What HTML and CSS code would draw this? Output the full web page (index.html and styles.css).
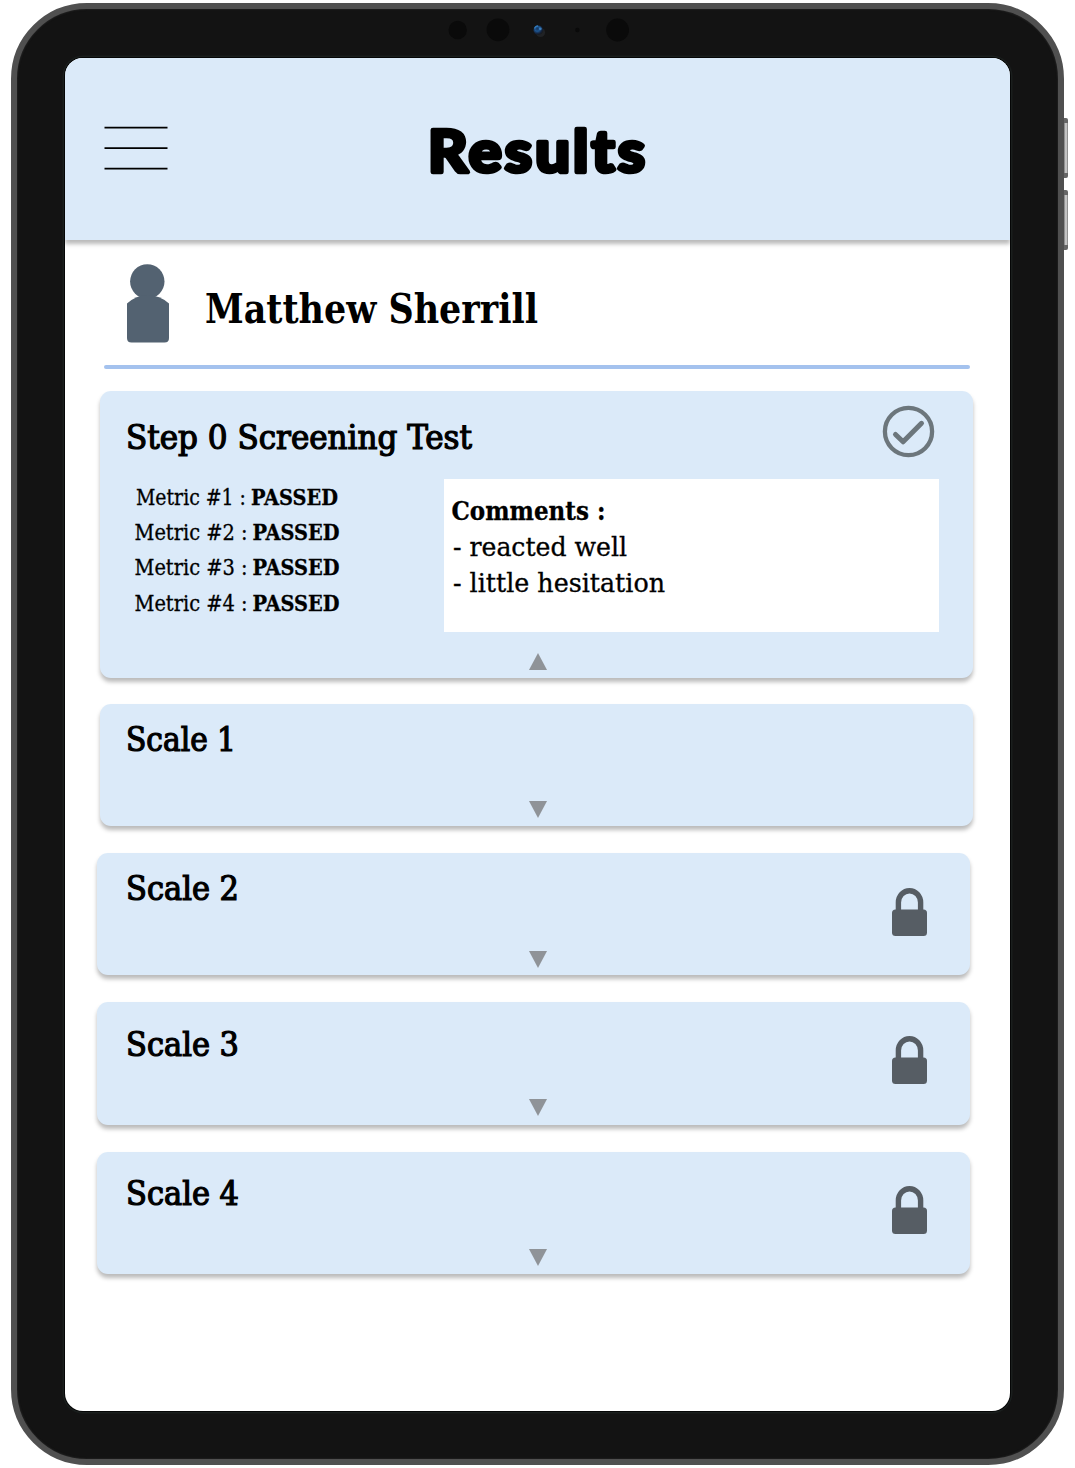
FILE: index.html
```html
<!DOCTYPE html>
<html lang="en">
<head>
<meta charset="utf-8">
<title>Results</title>
<link rel="stylesheet" href="styles.css">
</head>
<body>
<div class="tablet">
  <span class="side-button volume-up"></span>
  <span class="side-button volume-down"></span>
  <svg class="sensors" width="190" height="30" viewBox="443 15 190 30">
    <defs><radialGradient id="lens" cx=".4" cy=".35" r=".65"><stop offset="0" stop-color="#17365c"/><stop offset=".4" stop-color="#1d5590"/><stop offset=".75" stop-color="#14243f"/><stop offset="1" stop-color="#17191c"/></radialGradient></defs>
    <g fill="#0a0a0a"><circle cx="457.7" cy="30" r="9.2"/><circle cx="498" cy="29.8" r="11.4"/><circle cx="577.4" cy="30" r="2.2"/><circle cx="617.6" cy="30" r="11.4"/></g>
    <circle cx="540.5" cy="32.5" r="4.6" fill="#202225"/>
    <circle cx="538.3" cy="30.2" r="4.8" fill="url(#lens)"/>
    <path d="M534.5 28.5q1-2.500 3.500-2.500" fill="none" stroke="#3178b8" stroke-width="1.300"/>
    <circle cx="540.300" cy="28.800" r="1.400" fill="#397dba"/>
  </svg>
  <main class="screen">
    <header class="topbar">
      <svg class="menu" width="64" height="46" viewBox="104 125 64 46"><path d="M104.500 127.700H167.500M104.500 148.200H167.500M104.500 168.600H167.500"/></svg>
      <svg class="heading" width="230" height="70"><text x="3" y="56" textLength="220" lengthAdjust="spacingAndGlyphs">Results</text></svg>
    </header>
    <section class="profile">
      <svg class="person" width="42" height="79" viewBox="127 263.500 42 79"><circle cx="147.300" cy="281" r="17.200"/><path d="M127 303Q136 294.800 147.500 294.500Q160 294.800 169 303V337.500Q169 342 164.500 342H131.500Q127 342 127 337.500Z"/></svg>
      <svg class="name" width="360" height="60"><text x="0" y="45" textLength="333" lengthAdjust="spacingAndGlyphs">Matthew Sherrill</text></svg>
    </section>
    <div class="divider"></div>
    <section class="cards">
      <article class="card open">
        <div class="card-head">
          <svg class="title" width="360" height="50"><text x="0" y="40" textLength="346" lengthAdjust="spacingAndGlyphs">Step 0 Screening Test</text></svg>
          <svg class="check" width="53" height="53" viewBox="882.200 405.200 53 53"><circle cx="908.700" cy="431.700" r="23.600" stroke-width="4.300"/><path d="M895.700 434.700L903.300 442L921.700 423.500" stroke-width="5"/></svg>
        </div>
        <div class="details">
          <svg class="metrics" width="220" height="144" viewBox="130 479 220 144">
            <text x="136" y="504.800" textLength="110" lengthAdjust="spacingAndGlyphs">Metric #1 :</text><text class="strong" x="251" y="504.800" textLength="87" lengthAdjust="spacingAndGlyphs">PASSED</text>
            <text x="134.500" y="540.200" textLength="113" lengthAdjust="spacingAndGlyphs">Metric #2 :</text><text class="strong" x="252.500" y="540.200" textLength="87" lengthAdjust="spacingAndGlyphs">PASSED</text>
            <text x="134.500" y="575.300" textLength="113" lengthAdjust="spacingAndGlyphs">Metric #3 :</text><text class="strong" x="252.500" y="575.300" textLength="87" lengthAdjust="spacingAndGlyphs">PASSED</text>
            <text x="134.500" y="610.500" textLength="113" lengthAdjust="spacingAndGlyphs">Metric #4 :</text><text class="strong" x="252.500" y="610.500" textLength="87" lengthAdjust="spacingAndGlyphs">PASSED</text>
          </svg>
          <div class="comments">
            <svg width="300" height="150" viewBox="444 479 300 150">
              <text class="strong" x="451.500" y="519.500" textLength="154" lengthAdjust="spacingAndGlyphs">Comments :</text>
              <text x="453" y="556" textLength="174" lengthAdjust="spacingAndGlyphs">- reacted well</text>
              <text x="453" y="592" textLength="212" lengthAdjust="spacingAndGlyphs">- little hesitation</text>
            </svg>
          </div>
        </div>
        <svg class="arrow" width="18" height="17"><path d="M9 0L18 17H0Z"/></svg>
      </article>
      <article class="card">
        <svg class="title" width="130" height="50"><text x="0" y="40" textLength="110" lengthAdjust="spacingAndGlyphs">Scale 1</text></svg>
        <svg class="arrow" width="18" height="17"><path d="M0 0H18L9 17Z"/></svg>
      </article>
      <article class="card locked second">
        <div class="card-head">
          <svg class="title" width="130" height="50"><text x="0" y="40" textLength="113" lengthAdjust="spacingAndGlyphs">Scale 2</text></svg>
          <svg class="lock" width="35" height="48"><path d="M6.400 25V14.500a11.100 11.800 0 0 1 22.200 0V25" fill="none" stroke="#565d64" stroke-width="5.400"/><rect y="21.600" width="35" height="26.400" rx="3.500"/></svg>
        </div>
        <svg class="arrow" width="18" height="17"><path d="M0 0H18L9 17Z"/></svg>
      </article>
      <article class="card locked third">
        <div class="card-head">
          <svg class="title" width="130" height="50"><text x="0" y="40" textLength="113" lengthAdjust="spacingAndGlyphs">Scale 3</text></svg>
          <svg class="lock" width="35" height="48"><path d="M6.400 25V14.500a11.100 11.800 0 0 1 22.200 0V25" fill="none" stroke="#565d64" stroke-width="5.400"/><rect y="21.600" width="35" height="26.400" rx="3.500"/></svg>
        </div>
        <svg class="arrow" width="18" height="17"><path d="M0 0H18L9 17Z"/></svg>
      </article>
      <article class="card locked fourth">
        <div class="card-head">
          <svg class="title" width="130" height="50"><text x="0" y="40" textLength="113" lengthAdjust="spacingAndGlyphs">Scale 4</text></svg>
          <svg class="lock" width="35" height="48"><path d="M6.400 25V14.500a11.100 11.800 0 0 1 22.200 0V25" fill="none" stroke="#565d64" stroke-width="5.400"/><rect y="21.600" width="35" height="26.400" rx="3.500"/></svg>
        </div>
        <svg class="arrow" width="18" height="17"><path d="M0 0H18L9 17Z"/></svg>
      </article>
    </section>
  </main>
</div>
</body>
</html>
```
FILE: styles.css
```css
* { box-sizing: border-box; }
body { margin: 0; padding: 3px 0 0 11px; height: 1468px; background: #fff; overflow: hidden; font-family: "Roboto Slab", "DejaVu Serif Condensed", "DejaVu Serif", serif; }
svg { display: block; flex: none; overflow: visible; }
text { fill: #000; }
.tablet { position: relative; width: 1053px; height: 1462px; padding: 48px 47px 47px 47px; border: 6px solid #505050; border-radius: 76px; background: #131313; box-shadow: inset 0 0 2px #333; }
.side-button { position: absolute; left: 1047px; width: 4px; height: 60px; border-radius: 0 2px 2px 0; background: linear-gradient(#666 0 5px, transparent 5px 55px, #666 55px), linear-gradient(90deg, #777, #ddd 50%, #777); }
.volume-up { top: 109px; }
.volume-down { top: 181px; }
.sensors { position: absolute; left: 426px; top: 6px; }
.screen { width: 945px; height: 1353.500px; margin: .5px 0 0 1px; border-radius: 18px; overflow: hidden; background: #fff; box-shadow: 0 0 0 1px #050606, 0 0 0 2.500px #1a1e1d; }
.topbar { display: flex; height: 182.500px; padding: 67.500px 0 0 39px; background: #dbeaf9; box-shadow: 0 4px 4px rgba(0,0,0,.27); }
.menu { fill: none; stroke: #000; stroke-width: 1.700px; }
.heading { margin: -9px 0 0 257px; font-family: "Lato", sans-serif; font-weight: 700; font-size: 58px; letter-spacing: 3px; }
.heading text { stroke: #000; stroke-width: 4.600px; stroke-linejoin: round; stroke-linecap: round; }
.profile { display: flex; align-items: flex-start; height: 124.500px; padding: 23.500px 0 0 62px; }
.person { fill: #536271; }
.name { margin: 14.500px 0 0 35.500px; font-size: 40.500px; font-weight: 700; }
.divider { width: 865.500px; height: 4.500px; margin-left: 39px; border-radius: 2px; background: #a4c2ee; }
.cards { display: flex; flex-direction: column; padding: 21.500px 0 0 35.300px; }
.card { display: flex; flex-direction: column; justify-content: space-between; width: 873px; height: 122.500px; margin-bottom: 26.500px; padding: 7.500px 34px 8.500px 25.400px; border-radius: 11px; background: #dbeaf9; box-shadow: 0 4px 4px rgba(0,0,0,.27); }
.card.open { height: 287px; padding-top: 14px; margin-bottom: 26px; padding-bottom: 7.500px; }
.card-head { display: flex; justify-content: space-between; }
.open .card-head { padding-right: 4.300px; }
.open .title { margin-top: 4px; }
.title { font-size: 33.300px; }
.title text { stroke: #000; stroke-width: 1.200px; }
.check { fill: none; stroke: #6c767c; stroke-linecap: round; stroke-linejoin: round; }
.details { display: flex; justify-content: space-between; padding-left: 4.500px; }
.metrics { font-size: 22.600px; }
.details text { stroke: #000; stroke-width: .300px; }
.strong { font-weight: 700; }
.comments { width: 495.500px; height: 153px; background: #fff; font-size: 26.500px; }
.arrow { align-self: flex-start; margin-left: 403px; fill: #8f9398; }
.locked { margin-left: -3.500px; margin-bottom: 27.200px; padding-left: 28.900px; padding-right: 43px; }
.second .arrow { margin-bottom: -1px; }
.lock { margin-top: 27.800px; fill: #565d64; }
.locked .card-head { height: 76px; }
.third .title { margin-top: 6px; }
.third .lock, .fourth .lock { margin-top: 26.700px; }
.fourth .title { margin-top: 5.700px; }
```
